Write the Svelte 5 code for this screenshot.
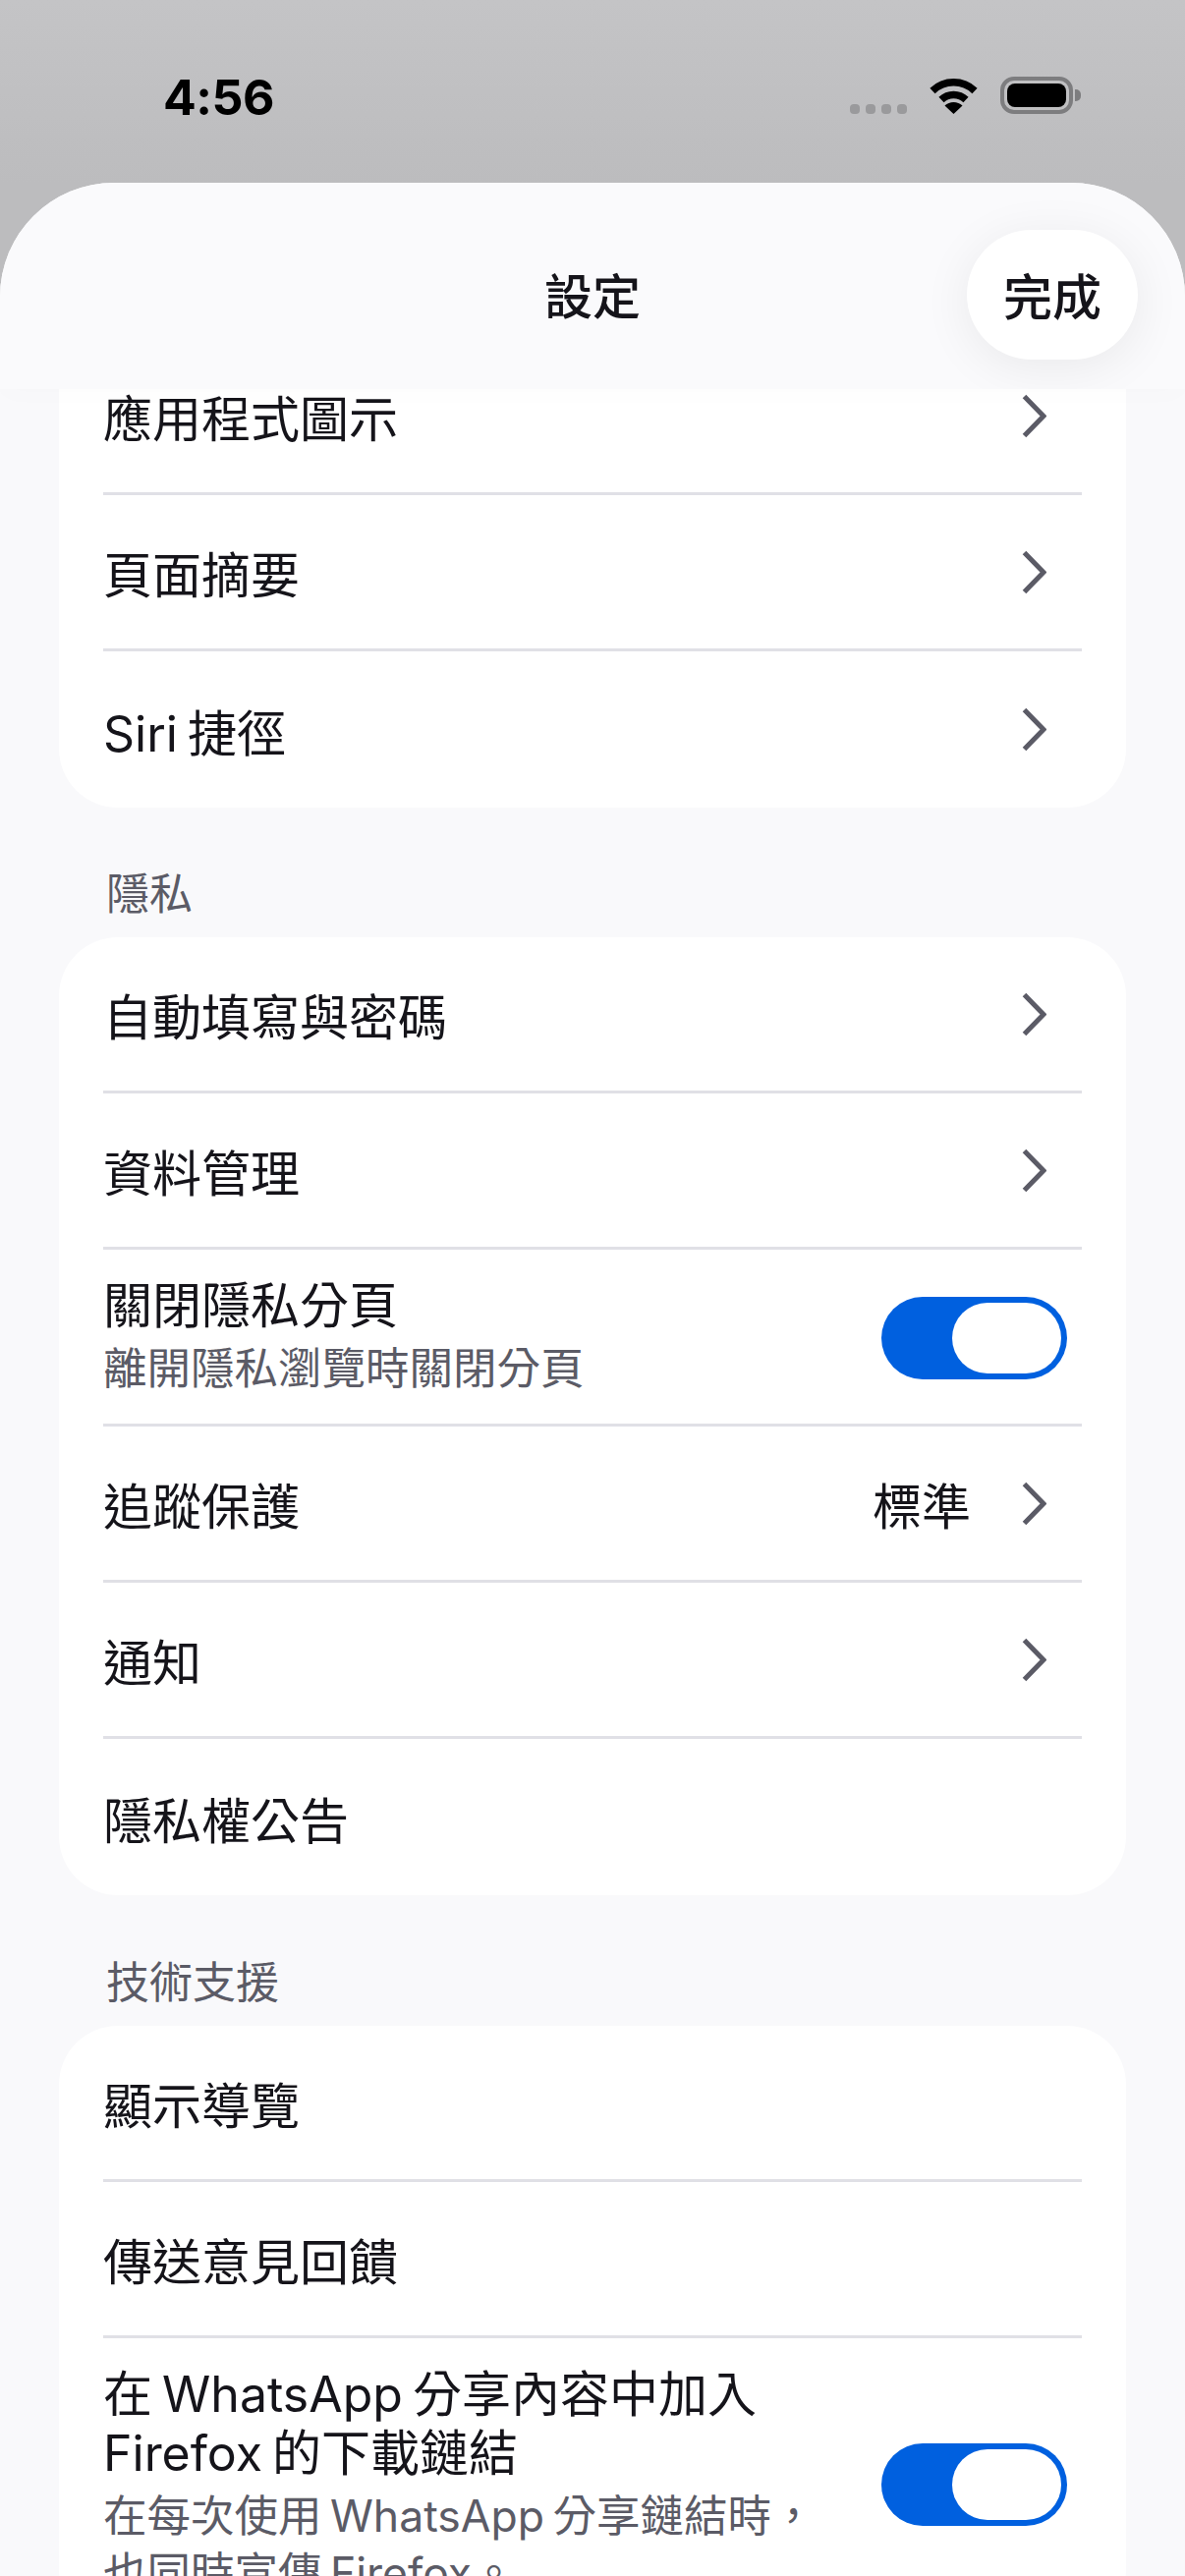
<script>
	const topRows = [
		{ label: '應用程式圖示', chevron: true },
		{ label: '頁面摘要', chevron: true },
		{ label: 'Siri 捷徑', chevron: true }
	]
	const privacyRows = [
		{ label: '自動填寫與密碼', chevron: true },
		{ label: '資料管理', chevron: true },
		{ label: '關閉隱私分頁', sub: '離開隱私瀏覽時關閉分頁', toggle: true },
		{ label: '追蹤保護', value: '標準', chevron: true },
		{ label: '通知', chevron: true },
		{ label: '隱私權公告' }
	]
	const supportRows = [
		{ label: '顯示導覽' },
		{ label: '傳送意見回饋' },
		{
			label: '在 WhatsApp 分享內容中加入 Firefox 的下載鏈結',
			sub: '在每次使用 WhatsApp 分享鏈結時\uFF0C也同時宣傳 Firefox。',
			toggle: true
		}
	]
</script>

{#snippet card(rows, extra)}
	<div class="card {extra}">
		{#each rows as row}
			<div class="row" class:tall={row.sub}>
				<div class="row-text">
					<div class="label">{row.label}</div>
					{#if row.sub}
						<div class="sub">{row.sub}</div>
					{/if}
				</div>
				{#if row.value}
					<span class="value">{row.value}</span>
				{/if}
				{#if row.chevron}
					<svg class="chevron" viewBox="0 0 25 45" width="25" height="45">
						<path d="M2.5 2.5 L22 22.5 L2.5 42.5" fill="none" stroke="#5b5b66" stroke-width="5" />
					</svg>
				{/if}
				{#if row.toggle}
					<div class="toggle"><div class="knob"></div></div>
				{/if}
			</div>
		{/each}
	</div>
{/snippet}

<div class="page">
	<div class="status">
		<span class="time">4:56</span>
		<div class="status-icons">
			<div class="dots">
				<i></i><i></i><i></i><i></i>
			</div>
			<svg class="wifi" viewBox="0 0 51 37" width="51" height="37">
				<path d="M4 13.5 A31 31 0 0 1 47 13.5" fill="none" stroke="#000" stroke-width="7.5" />
				<path d="M13 22.5 A18 18 0 0 1 38 22.5" fill="none" stroke="#000" stroke-width="7.5" />
				<path d="M25.5 37 L16.5 28.5 A13 13 0 0 1 34.5 28.5 Z" fill="#000" />
			</svg>
			<div class="battery"><div class="battery-fill"></div></div>
			<div class="battery-nub"></div>
		</div>
	</div>

	<div class="sheet">
		<div class="header">
			<span></span>
			<div class="title">設定</div>
			<div class="done">完成</div>
		</div>
		<div class="list">
			{@render card(topRows, 'first')}
			<div class="section">隱私</div>
			{@render card(privacyRows, '')}
			<div class="section">技術支援</div>
			{@render card(supportRows, '')}
		</div>
	</div>
</div>

<style>
	:global(body) {
		margin: 0;
		background: #bdbdbf;
	}
	.page {
		width: 1206px;
		height: 2622px;
		overflow: hidden;
		display: flex;
		flex-direction: column;
		background: linear-gradient(#c4c4c6, #bcbcbe 186px);
		font-family: Inter, "Noto Sans CJK TC", sans-serif;
		color: #15141a;
	}
	.status {
		height: 186px;
		flex: none;
		display: flex;
		justify-content: space-between;
		padding: 70px 106px 0 166px;
		box-sizing: border-box;
	}
	.time {
		font-size: 50px;
		font-weight: 700;
		line-height: 58px;
		color: #000;
		letter-spacing: -0.5px;
	}
	.status-icons {
		display: flex;
		align-items: flex-start;
		padding-top: 8px;
	}
	.dots {
		display: flex;
		gap: 6px;
		margin-top: 28px;
		margin-right: 22px;
	}
	.dots i {
		width: 10px;
		height: 10px;
		border-radius: 4px;
		background: #9a9a9c;
	}
	.wifi {
		margin-top: 1px;
		margin-right: 22px;
	}
	.battery {
		width: 74px;
		height: 38px;
		box-sizing: border-box;
		border: 4px solid #7d7d7f;
		border-radius: 14px;
		padding: 3px;
	}
	.battery-fill {
		height: 100%;
		background: #000;
		border-radius: 8px;
	}
	.battery-nub {
		width: 6px;
		height: 12px;
		margin-top: 13px;
		margin-left: 2px;
		background: #7d7d7f;
		border-radius: 0 5px 5px 0;
	}
	.sheet {
		flex: 1;
		min-height: 0;
		display: flex;
		flex-direction: column;
		background: #f9f9fb;
		border-radius: 116px 116px 0 0;
		overflow: hidden;
	}
	.header {
		height: 210px;
		flex: none;
		position: relative;
		z-index: 1;
		display: grid;
		grid-template-columns: 1fr auto 1fr;
		align-items: center;
		padding: 0 48px;
		box-sizing: border-box;
		background: #fafafc;
		overflow: hidden;
		box-shadow: 0 8px 24px rgba(0, 0, 0, 0.012);
	}
	.title {
		font-size: 49px;
		font-weight: 500;
		margin-top: 14px;
	}
	.done {
		justify-self: end;
		width: 174px;
		height: 132px;
		margin-top: 18px;
		border-radius: 66px;
		background: #fff;
		box-shadow: 0 8px 50px rgba(0, 0, 0, 0.07);
		display: flex;
		align-items: center;
		justify-content: center;
		font-size: 50px;
		font-weight: 500;
		padding-bottom: 2px;
		box-sizing: border-box;
	}
	.list {
		padding: 0 60px;
		flex: 1;
		min-height: 0;
	}
	.card {
		background: #fff;
		border-radius: 60px;
		padding-left: 45px;
		padding-right: 45px;
	}
	.card.first {
		margin-top: -51px;
		margin-bottom: -1px;
		border-radius: 0 0 60px 60px;
	}
	.section {
		font-size: 44px;
		line-height: 54px;
		color: #5b5b66;
		padding-left: 48px;
		margin-top: 62px;
		margin-bottom: 17px;
	}
	.row {
		min-height: 159px;
		box-sizing: border-box;
		display: flex;
		align-items: center;
		border-bottom: 3px solid #e0e0e6;
		word-spacing: -4px;
	}
	.row:last-child {
		border-bottom: none;
	}
	.row.tall {
		padding: 27px 0 27px;
	}
	.row-text {
		flex: 1;
		min-width: 0;
		padding-top: 8px;
	}
	.row.tall .row-text {
		padding-top: 0;
	}
	.label {
		font-size: 50px;
		line-height: 60px;
		max-width: 760px;
	}
	.sub {
		font-size: 44.5px;
		line-height: 58px;
		color: #5b5b66;
		margin-top: 5px;
		max-width: 740px;
	}
	.value {
		font-size: 50px;
		line-height: 60px;
		padding-top: 8px;
		margin-right: 52px;
	}
	.chevron {
		margin-right: 36px;
		flex: none;
	}
	.toggle {
		width: 189px;
		height: 84px;
		flex: none;
		box-sizing: border-box;
		margin-right: 15px;
		margin-top: 2px;
		padding: 6px;
		border-radius: 42px;
		background: #0060df;
		display: flex;
		justify-content: flex-end;
	}
	.knob {
		width: 111px;
		height: 72px;
		border-radius: 36px;
		background: #fff;
	}
</style>
